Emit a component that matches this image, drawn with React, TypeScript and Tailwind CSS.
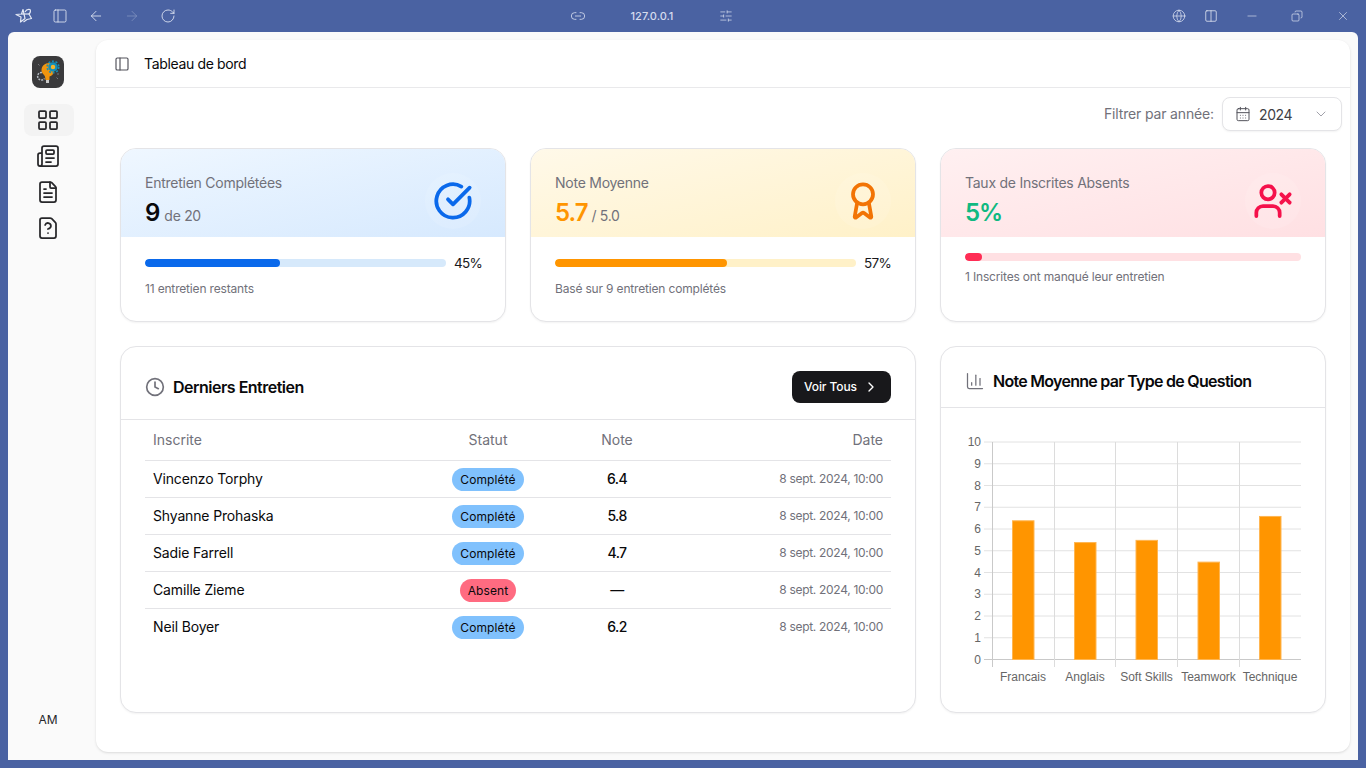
import {
  ArrowLeft,
  ArrowRight,
  Award,
  CalendarDays,
  ChartColumn,
  ChevronDown,
  ChevronRight,
  CircleCheckBig,
  Clock,
  Columns2,
  Copy,
  FileQuestion,
  FileText,
  Globe,
  LayoutGrid,
  Link2,
  Minus,
  Newspaper,
  PanelLeft,
  RotateCw,
  SlidersHorizontal,
  UserX,
  X,
} from 'lucide-react';
import type {ReactNode} from 'react';

const rows = [
  {name: 'Vincenzo Torphy', status: 'Complété', note: '6.4'},
  {name: 'Shyanne Prohaska', status: 'Complété', note: '5.8'},
  {name: 'Sadie Farrell', status: 'Complété', note: '4.7'},
  {name: 'Camille Zieme', status: 'Absent', note: '—'},
  {name: 'Neil Boyer', status: 'Complété', note: '6.2'},
];

const bars = [
  {label: 'Francais', x: 1012, value: 6.4, cx: 1023},
  {label: 'Anglais', x: 1074, value: 5.4, cx: 1085},
  {label: 'Soft Skills', x: 1135.5, value: 5.5, cx: 1146.5},
  {label: 'Teamwork', x: 1197.5, value: 4.5, cx: 1208.5},
  {label: 'Technique', x: 1259, value: 6.6, cx: 1270},
];

function AppLogo() {
  return (
    <svg width="32" height="32" viewBox="0 0 32 32" className="rounded-lg bg-[#3a3a3c]">
      <path d="M20 7.500c-5.500-1.500-10.500 1.500-10.500 7 0 2.500 2.500 4 3.500 6l.5 3.500h4v-3.500c2.500-.5 4.500-3 4.500-6z" fill="#f0950f" />
      <rect x="14" y="24" width="3" height="3" fill="#c9c9c9" />
      <path d="M10 16.500a3.800 3.800 0 1 0 2.500 6" fill="none" stroke="#b4bac2" strokeWidth="1.500" strokeDasharray="2 1" />
      <circle cx="21" cy="11" r="3.500" fill="#f4b42a" stroke="#128fb8" strokeWidth="2.500" />
      <circle cx="21" cy="11" r="5.800" fill="none" stroke="#128fb8" strokeWidth="1.600" strokeDasharray="2 1.650" />
      <path d="M6 8l1.500 1.500M26 23l-1.500-1.500M27 18h-2" stroke="#77787c" strokeWidth="1" />
    </svg>
  );
}

function BrowserLogo() {
  return (
    <svg width="18" height="16" viewBox="0 0 18 16" fill="none" stroke="#e4e9f5" strokeWidth="1.200" strokeLinejoin="round" className="-mr-px">
      <path d="M1 6.500 6.500 6 8 1.500l2 9-4.500 3.500.5-5z" />
      <path d="M10 4c1-2 3-3 5-2.500.8 1.500.5 3-1 4.500l2.500 4.500-4.500 1-3.500 2.500" />
      <path d="M6.500 6l7.500 0" />
    </svg>
  );
}

function TitleBar() {
  const cls = 'h-4 w-4 text-[#e4e9f5]';
  return (
    <div className="flex h-8 shrink-0 items-center text-[#d5dcee]">
      <div className="flex w-[570px] items-center gap-5 pl-[15px]">
        <BrowserLogo />
        <PanelLeft className={cls} strokeWidth={1.25} />
        <ArrowLeft className={cls} strokeWidth={1.25} />
        <ArrowRight className="h-4 w-4 text-[#7e90bf]" strokeWidth={1.25} />
        <RotateCw className={cls} strokeWidth={1.25} />
      </div>
      <Link2 className="h-4 w-4 text-[#d5dcee]" strokeWidth={1.25} />
      <span className="ml-[36px] w-[60px] text-center text-[11px] font-medium">127.0.0.1</span>
      <SlidersHorizontal className="ml-[37px] h-3.5 w-3.5 text-[#d5dcee]" strokeWidth={1.25} />
      <div className="ml-auto flex items-center pr-[16px]">
        <Globe className="h-3.5 w-3.5 text-[#dfe5f3]" strokeWidth={1.25} />
        <Columns2 className="ml-[18px] h-3.5 w-3.5 text-[#eef1f8]" strokeWidth={1.25} />
        <Minus className="ml-[27px] h-3.5 w-3.5 text-[#eef1f8]" strokeWidth={1} />
        <Copy className="ml-[32px] h-3 w-3 -scale-x-100 text-[#eef1f8]" strokeWidth={1.25} />
        <X className="ml-[33px] h-3.5 w-3.5 text-[#eef1f8]" strokeWidth={1} />
      </div>
    </div>
  );
}

function Sidebar() {
  const btn = 'flex h-8 w-[50px] items-center justify-center rounded-lg pr-[2px] text-[#27272a]';
  return (
    <aside className="flex w-[88px] shrink-0 flex-col items-center pt-6 pr-2 pb-[32px]">
      <AppLogo />
      <nav className="mt-4 ml-[2px] flex flex-col gap-1">
        <div className={`${btn} bg-[#f3f3f3]`}>
          <LayoutGrid className="h-6 w-6" strokeWidth={1.75} />
        </div>
        <div className={btn}>
          <Newspaper className="h-6 w-6" strokeWidth={1.75} />
        </div>
        <div className={btn}>
          <FileText className="h-6 w-6" strokeWidth={1.75} />
        </div>
        <div className={btn}>
          <FileQuestion className="h-6 w-6" strokeWidth={1.75} />
        </div>
      </nav>
      <span className="mt-auto text-xs text-[#27272a]">AM</span>
    </aside>
  );
}

type StatProps = {
  title: string;
  value: string;
  valueClass: string;
  suffix?: string;
  gradient: string;
  icon: ReactNode;
  barTrack: string;
  barFill: string;
  percent: number;
  label?: string;
  footer: string;
};

function StatCard({title, value, valueClass, suffix, gradient, icon, barTrack, barFill, percent, label, footer}: StatProps) {
  return (
    <div className="h-[174px] overflow-hidden rounded-2xl border border-[#e4e4e7] bg-white shadow-xs">
      <div className={`flex h-[88px] items-start justify-between bg-gradient-to-br px-6 pt-6 ${gradient}`}>
        <div>
          <p className="text-[14px] leading-5 tracking-[-0.25px] text-[#71717a]">{title}</p>
          <p className="mt-[4px] leading-8">
            <span className={`text-[24px] font-semibold ${valueClass}`}>{value}</span>
            {suffix && <span className="ml-1 text-[14px] tracking-[-0.3px] text-[#71717a]">{suffix}</span>}
          </p>
        </div>
        <div className="flex h-14 w-14 items-center justify-center rounded-full bg-white/10">{icon}</div>
      </div>
      <div className="px-6 pt-4">
        <div className={`flex items-center gap-2 ${label ? 'h-5' : 'h-2'}`}>
          <div className={`h-2 flex-1 overflow-hidden rounded-full ${barTrack}`}>
            <div className={`h-full rounded-full ${barFill}`} style={{width: `${percent}%`}} />
          </div>
          {label && <span className="w-[27px] text-[13.5px] tracking-[-0.7px] whitespace-nowrap text-[#18181b]">{label}</span>}
        </div>
        <p className="mt-2 text-xs tracking-[-0.17px] text-[#71717a]">{footer}</p>
      </div>
    </div>
  );
}

function StatusBadge({status}: {status: string}) {
  const color = status === 'Absent' ? 'bg-[#ff6b81]' : 'bg-[#80c1fd]';
  return <span className={`inline-block h-[23px] rounded-full px-2 text-xs leading-[23px] tracking-[0.1px] text-[#09090b] ${color}`}>{status}</span>;
}

function InterviewsCard() {
  return (
    <div className="col-span-2 h-[367px] rounded-2xl border border-[#e4e4e7] bg-white shadow-xs">
      <div className="flex items-center justify-between border-b border-[#e4e4e7] px-6 pt-6 pb-4">
        <div className="flex items-center gap-2">
          <Clock className="h-5 w-5 text-[#71717a]" strokeWidth={2} />
          <h2 className="text-base font-semibold tracking-[-0.5px] text-[#09090b]">Derniers Entretien</h2>
        </div>
        <button className="flex h-8 w-[99px] items-center justify-between rounded-lg bg-[#18181b] pr-3 pl-3 text-xs font-medium tracking-[-0.1px] text-white">
          Voir Tous
          <ChevronRight className="h-4 w-4" strokeWidth={2} />
        </button>
      </div>
      <div className="px-6">
        <table className="w-full table-fixed border-collapse">
          <colgroup>
            <col className="w-[265px]" />
            <col className="w-[156px]" />
            <col className="w-[102px]" />
            <col />
          </colgroup>
          <thead>
            <tr className="h-[40px] border-b border-[#e4e4e7] text-[14px] text-[#71717a]">
              <th className="px-2 text-left font-normal">Inscrite</th>
              <th className="font-normal">Statut</th>
              <th className="font-normal">Note</th>
              <th className="px-2 text-right font-normal">Date</th>
            </tr>
          </thead>
          <tbody>
            {rows.map((row, i) => (
              <tr key={row.name} className={`h-[37px] ${i < rows.length - 1 ? 'border-b border-[#e4e4e7]' : ''}`}>
                <td className="px-2 text-[14px] tracking-[-0.15px] text-[#09090b]">{row.name}</td>
                <td className="text-center">
                  <StatusBadge status={row.status} />
                </td>
                <td className="text-center text-[14px] font-medium tracking-[-0.6px] text-[#09090b]">{row.note}</td>
                <td className="px-2 text-right text-xs tracking-[-0.3px] text-[#71717a]">8 sept. 2024, 10:00</td>
              </tr>
            ))}
          </tbody>
        </table>
      </div>
    </div>
  );
}

function ScoreChart() {
  const ticks = [0, 1, 2, 3, 4, 5, 6, 7, 8, 9, 10];
  const y = (v: number) => 659.5 - v * 21.75;
  return (
    <svg width="384" height="304" viewBox="941 408 384 304" className="block font-['Liberation_Sans',sans-serif]">
      {ticks.map((t) => (
        <g key={t}>
          <line x1="984" x2="1301" y1={y(t)} y2={y(t)} stroke={t === 0 ? '#c9c9c9' : '#e2e2e2'} />
          <text x="981" y={y(t) + 4} textAnchor="end" fontSize="12" fill="#666">
            {t}
          </text>
        </g>
      ))}
      {[992.5, 1054.5, 1115.5, 1177.5, 1239.5].map((x, i) => (
        <line key={x} x1={x} x2={x} y1="442" y2="667" stroke={i === 0 ? '#c9c9c9' : '#dcdcdc'} />
      ))}
      {bars.map((b) => (
        <g key={b.label}>
          <rect x={b.x + 0.5} y={y(b.value) + 0.5} width="21.500" height={659 - y(b.value)} fill="#ff9500" stroke="#ffb652" />
          <text x={b.cx} y="681" textAnchor="middle" fontSize="12" fill="#666">
            {b.label}
          </text>
        </g>
      ))}
    </svg>
  );
}

export default function App() {
  return (
    <div className="flex h-[768px] w-[1366px] flex-col overflow-hidden bg-[#4a62a2] font-['Inter',sans-serif]">
      <TitleBar />
      <div className="mx-2 mb-2 flex min-h-0 flex-1 rounded-t-md bg-[#fafafa]">
        <Sidebar />
        <main className="my-2 mr-2 flex-1 rounded-xl bg-white shadow-sm">
          <header className="flex h-12 items-center gap-[14px] border-b border-[#e9e9eb] pl-[18px]">
            <PanelLeft className="h-4 w-4 text-[#52525b]" strokeWidth={1.75} />
            <h1 className="text-[14px] tracking-[-0.35px] text-[#09090b]">Tableau de bord</h1>
          </header>

          <div className="flex items-center justify-end gap-2 pt-[9px] pr-2 pb-[17px]">
            <span className="mb-[2px] text-[14px] tracking-[-0.15px] text-[#71717a]">Filtrer par année:</span>
            <div className="flex h-[34px] w-[120px] items-center rounded-lg border border-[#e4e4e7] bg-white px-[12px] shadow-xs">
              <CalendarDays className="h-4 w-4 text-[#52525b]" strokeWidth={1.5} />
              <span className="ml-2 text-[14px] tracking-[-0.4px] text-[#3f3f46]">2024</span>
              <ChevronDown className="ml-auto h-4 w-4 text-[#a1a1aa]" strokeWidth={1.5} />
            </div>
          </div>

          <div className="grid grid-cols-3 gap-6 px-6">
            <StatCard
              title="Entretien Complétées"
              value="9"
              valueClass="text-[#09090b]"
              suffix="de 20"
              gradient="from-[#eff7ff] to-[#d6e9fe]"
              icon={<CircleCheckBig className="h-10 w-10 text-[#0a69eb]" strokeWidth={2.25} />}
              barTrack="bg-[#d6e9fb]"
              barFill="bg-[#0a69eb]"
              percent={45}
              label="45%"
              footer="11 entretien restants"
            />
            <StatCard
              title="Note Moyenne"
              value="5.7"
              valueClass="tracking-[-1px] text-[#ff9500]"
              suffix="/ 5.0"
              gradient="from-[#fff9e9] to-[#fff1c8]"
              icon={<Award className="h-10 w-10 text-[#f27405]" strokeWidth={2.25} />}
              barTrack="bg-[#fff1c8]"
              barFill="bg-[#ff9500]"
              percent={57}
              label="57%"
              footer="Basé sur 9 entretien complétés"
            />
            <StatCard
              title="Taux de Inscrites Absents"
              value="5%"
              valueClass="tracking-[-1px] text-[#10b981]"
              gradient="from-[#fff0f1] to-[#ffe0e3]"
              icon={<UserX className="h-10 w-10 text-[#f5114b]" strokeWidth={2.25} />}
              barTrack="bg-[#ffe0e3]"
              barFill="bg-[#ff2d55]"
              percent={5}
              footer="1 Inscrites ont manqué leur entretien"
            />
          </div>

          <div className="mt-6 grid grid-cols-3 gap-6 px-6">
            <InterviewsCard />
            <div className="h-[367px] rounded-2xl border border-[#e4e4e7] bg-white shadow-xs">
              <div className="flex items-center gap-2 border-b border-[#e4e4e7] px-6 pt-6 pb-4">
                <ChartColumn className="h-5 w-5 text-[#71717a]" strokeWidth={1.5} />
                <h2 className="text-base leading-5 font-semibold tracking-[-0.72px] text-[#09090b]">Note Moyenne par Type de Question</h2>
              </div>
              <ScoreChart />
            </div>
          </div>
        </main>
      </div>
    </div>
  );
}
